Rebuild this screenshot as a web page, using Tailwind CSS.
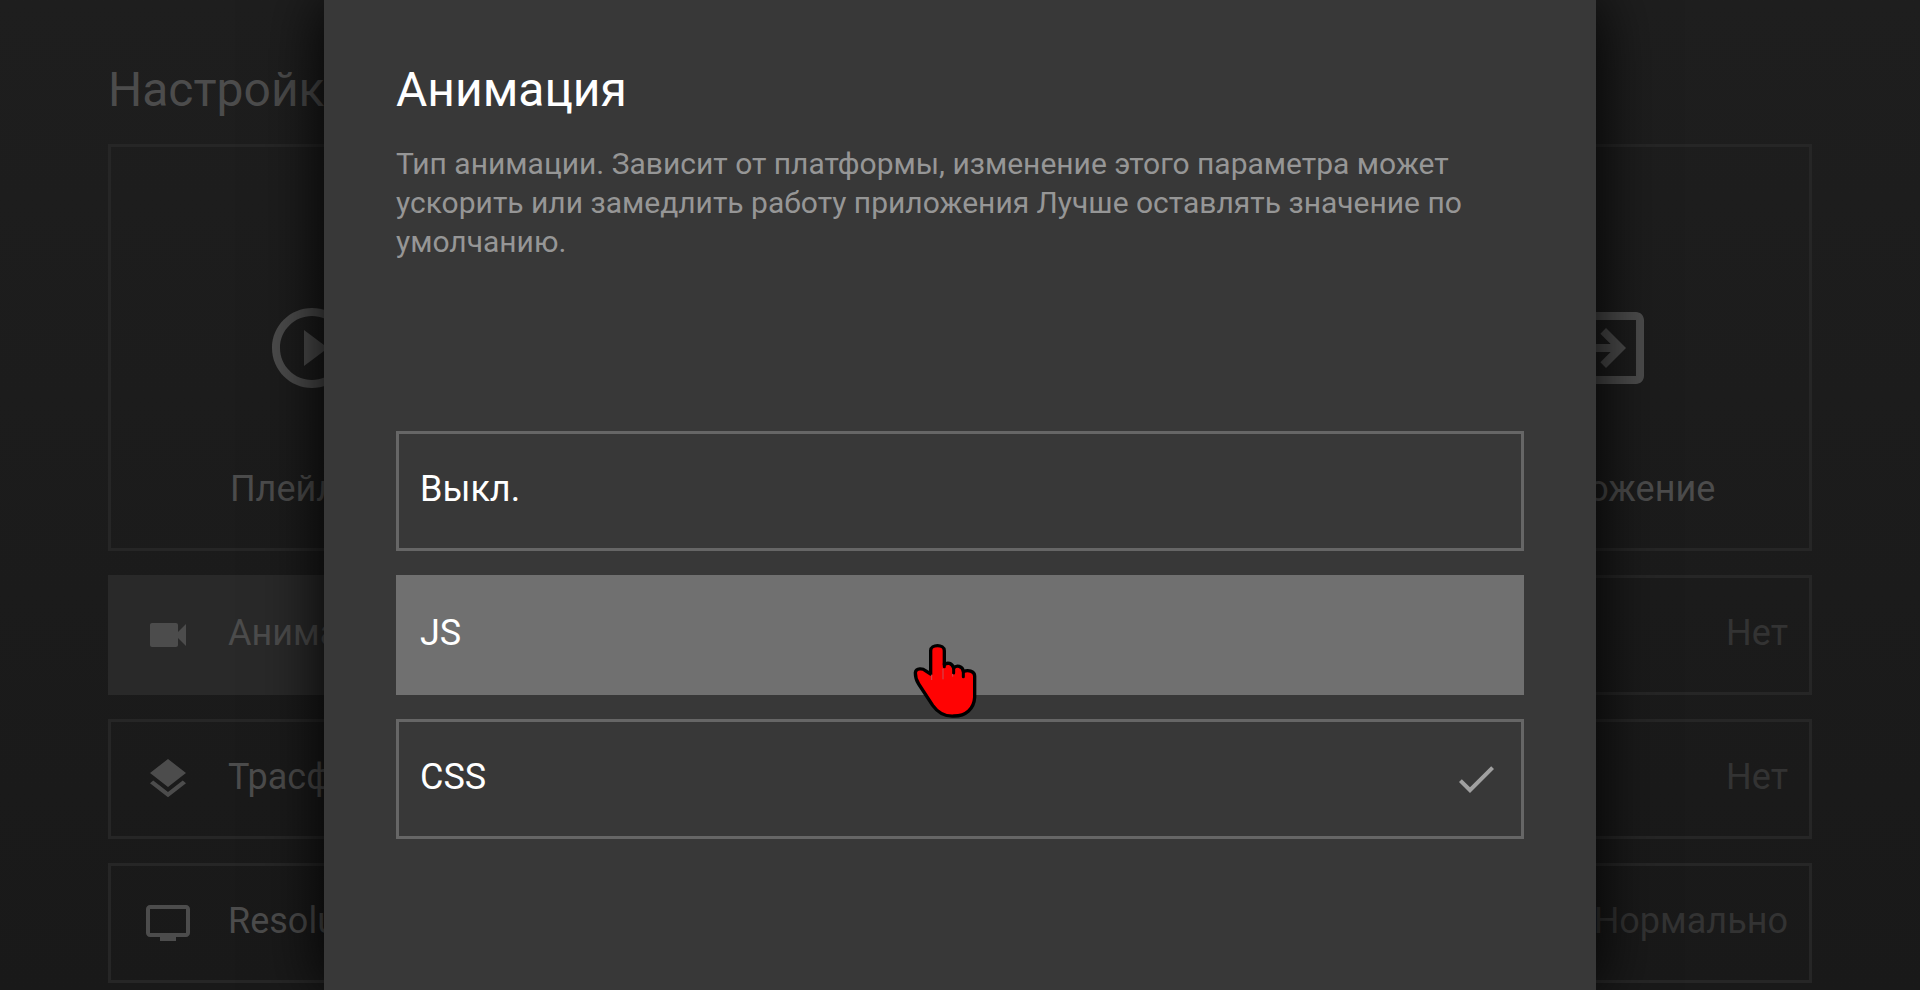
<!DOCTYPE html>
<html lang="ru">
<head>
    <meta charset="UTF-8">
    <meta name="viewport" content="width=device-width, initial-scale=1.0">
    <title>Настройки</title>
    <script src="https://cdn.jsdelivr.net/npm/@tailwindcss/browser@4"></script>
</head>
<body class="relative h-screen overflow-hidden bg-linear-to-b from-[#1e1e1e] to-[#191919] font-['Roboto',sans-serif] text-4xl text-[#4c4c4c]">

<!-- Настройки -->
<main class="px-[108px] pt-[62px]">
    <h1 class="mb-[26px] text-5xl leading-[56px]">Настройки</h1>

    <div class="grid grid-cols-4 gap-6">
        <button class="flex h-[407px] flex-col items-center border-3 border-[#262626] pt-[153px]">
            <svg class="size-24" viewBox="0 0 24 24" fill="currentColor"><path d="M10 16.5l6-4.5-6-4.5v9zM12 2C6.48 2 2 6.48 2 12s4.48 10 10 10 10-4.48 10-10S17.52 2 12 2zm0 18c-4.41 0-8-3.59-8-8s3.59-8 8-8 8 3.59 8 8-3.59 8-8 8z"/></svg>
            <span class="mt-[72px] leading-[42px]">Плейлист</span>
        </button>
        <button class="col-start-4 flex h-[407px] flex-col items-center border-3 border-[#262626] pt-[153px]">
            <svg class="size-24" viewBox="0 0 24 24" fill="currentColor"><path d="M10.09 15.59L11.5 17l5-5-5-5-1.41 1.41L12.67 11H3v2h9.67l-2.58 2.59zM19 3H5c-1.11 0-2 .9-2 2v4h2V5h14v14H5v-4H3v4c0 1.1.89 2 2 2h14c1.1 0 2-.9 2-2V5c0-1.1-.9-2-2-2z"/></svg>
            <span class="mt-[72px] leading-[42px]">Приложение</span>
        </button>
    </div>

    <div class="mt-6 grid grid-cols-2 gap-6">
        <button class="flex h-[120px] items-center gap-9 border-3 border-[#292929] bg-[#292929] px-[33px]">
            <svg class="size-12" viewBox="0 0 24 24" fill="currentColor"><path d="M17 10.5V7c0-.55-.45-1-1-1H4c-.55 0-1 .45-1 1v10c0 .55.45 1 1 1h12c.55 0 1-.45 1-1v-3.5l4 4v-11l-4 4z"/></svg>
            <span class="pb-1">Анимация</span>
        </button>
        <button class="flex h-[120px] items-center justify-end border-3 border-[#262626] px-[21px] text-[#333]">
            <span class="pb-1">Нет</span>
        </button>
        <button class="flex h-[120px] items-center gap-9 border-3 border-[#262626] px-[33px]">
            <svg class="size-12" viewBox="0 0 24 24" fill="currentColor"><path d="M11.99 18.54l-7.37-5.73L3 14.07l9 7 9-7-1.63-1.27-7.38 5.74zM12 16l7.36-5.73L21 9l-9-7-9 7 1.63 1.27L12 16z"/></svg>
            <span class="pb-1">Трасфер</span>
        </button>
        <button class="flex h-[120px] items-center justify-end border-3 border-[#262626] px-[21px] text-[#333]">
            <span class="pb-1">Нет</span>
        </button>
        <button class="flex h-[120px] items-center gap-9 border-3 border-[#262626] px-[33px]">
            <svg class="size-12" viewBox="0 0 24 24" fill="currentColor"><path d="M21 3H3c-1.1 0-2 .9-2 2v12c0 1.1.9 2 2 2h5v2h8v-2h5c1.1 0 2-.9 2-2V5c0-1.1-.9-2-2-2zm0 14H3V5h18v12z"/></svg>
            <span class="pb-1">Resolution</span>
        </button>
        <button class="flex h-[120px] items-center justify-end border-3 border-[#262626] px-[21px] text-[#333]">
            <span class="pb-1">Нормально</span>
        </button>
    </div>
</main>

<!-- Окно выбора -->
<div class="absolute inset-0 flex justify-center">
    <section role="dialog" aria-labelledby="dialog-title" class="w-full max-w-[1272px] bg-[#383838] px-[72px] pt-[62px] shadow-[0_0_60px_#000]">
        <h2 id="dialog-title" class="mb-[26px] text-5xl leading-[56px] text-white">Анимация</h2>
        <p class="text-[30px] leading-[39px] text-[#969696]">Тип анимации. Зависит от платформы, изменение этого параметра может ускорить или замедлить работу приложения Лучше оставлять значение по умолчанию.</p>

        <div class="mt-[170px] flex flex-col gap-6 text-white">
            <button class="flex h-[120px] items-center border-3 border-[#666] px-[21px]">
                <span class="pb-1">Выкл.</span>
            </button>
            <button class="relative z-10 flex h-[120px] items-center border-3 border-[#707070] bg-[#707070] px-[21px]">
                <span class="pb-1">JS</span>
                <!-- указатель -->
                <svg class="absolute top-[65px] left-[514px] h-[76px] w-16" viewBox="99 69 192 228">
                    <path fill="#ff0303" stroke="#000" stroke-width="10" stroke-linejoin="round" d="M152 162V92C152 72 193 72 193 92V134C202 126 216 129 221 144C229 134 248 137 250 155C263 149 284 152 284 168V232C282 266 258 288 222 288C190 290 172 276 158 256L116 192C108 180 106 170 106 158C108 142 130 146 136 152Z"/>
                    <path fill="none" stroke="#000" stroke-width="9" stroke-linecap="round" d="M193 130V140M221 144V159M250 155V170"/>
                    <path fill="none" stroke="#c8505a" stroke-width="3" d="M155 164V180M189 146V178M218 162V170"/>
                </svg>
            </button>
            <button class="flex h-[120px] items-center justify-between border-3 border-[#666] px-[21px]">
                <span class="pb-1">CSS</span>
                <svg class="size-12 text-[#a0a0a0]" viewBox="0 0 24 24" fill="currentColor"><path d="M21 7L9 19l-5.5-5.5 1.41-1.41L9 16.17 19.59 5.59 21 7z"/></svg>
            </button>
        </div>
    </section>
</div>

</body>
</html>
